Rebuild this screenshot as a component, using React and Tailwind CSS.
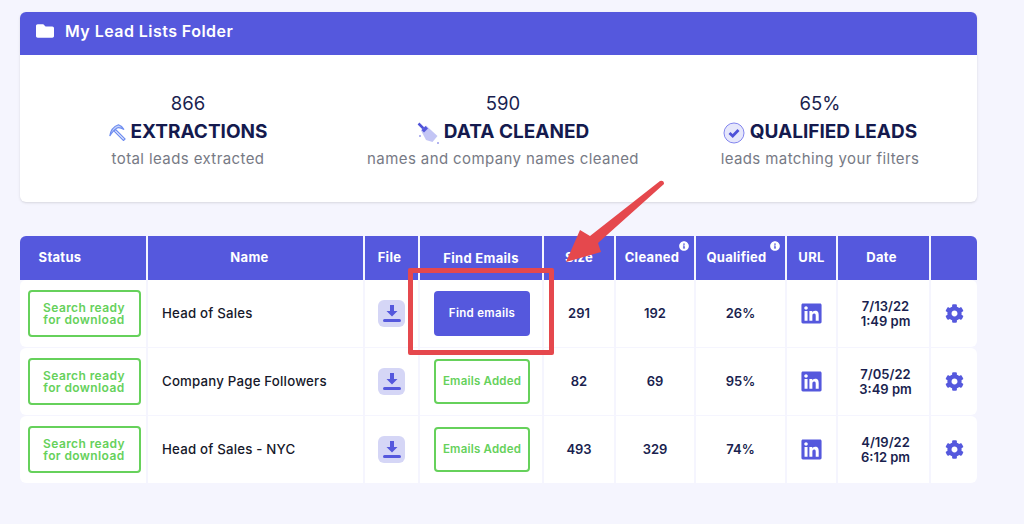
import { FaCog, FaFolder, FaInfoCircle, FaLinkedin } from "react-icons/fa";

const cols = "grid grid-cols-[128px_217px_55px_124px_72px_80px_91px_51px_93px_46px]";

const stats = [
  { value: "866", title: "EXTRACTIONS", sub: "total leads extracted", icon: "pick", w: "w-[336px]" },
  { value: "590", title: "DATA CLEANED", sub: "names and company names cleaned", icon: "broom", w: "w-[294px]" },
  { value: "65%", title: "QUALIFIED LEADS", sub: "leads matching your filters", icon: "check", w: "w-[340px]" },
];

const rows = [
  { name: "Head of Sales", found: false, size: "291", cleaned: "192", qualified: "26%", date: "7/13/22", time: "1:49 pm" },
  { name: "Company Page Followers", found: true, size: "82", cleaned: "69", qualified: "95%", date: "7/05/22", time: "3:49 pm" },
  { name: "Head of Sales - NYC", found: true, size: "493", cleaned: "329", qualified: "74%", date: "4/19/22", time: "6:12 pm" },
];

const PickIcon = () => (
  <svg width="17" height="17" viewBox="0 0 17 17" fill="none" stroke="#6f8df0" strokeWidth="1.200">
    <path d="M0.800 12C1.500 7 4.500 2.500 9.500 0.800C11.500 1.500 13.500 3 15 5.500C12.500 4 10.500 3.500 8.500 3.800C5.500 5.500 3 8.500 0.800 12Z" fill="#c5d2fa" />
    <path d="M6.500 5.500L16 15L14.500 16.500L5 7Z" fill="#ffffff" />
  </svg>
);

const BroomIcon = () => (
  <svg width="22" height="22" viewBox="0 0 22 22">
    <path d="M1.500 1.500L8 8" stroke="#4f52d8" strokeWidth="2.500" />
    <path d="M4 8.500L9 3.500L20.500 14L15.500 20L9 18Z" fill="#c3c5f5" />
    <path d="M4.500 8L8.500 4L11 6.500L7 10.500Z" fill="#5558dd" />
    <circle cx="21" cy="21" r="0.800" fill="#5558dd" />
    <circle cx="3" cy="14" r="0.800" fill="#5558dd" />
  </svg>
);

const CheckIcon = () => (
  <svg width="22" height="22" viewBox="0 0 22 22" fill="none">
    <circle cx="11" cy="11" r="10" fill="#e6e7fb" stroke="#8285ee" strokeWidth="1" />
    <path d="M6.500 11L9.700 14L15.500 8" stroke="#4f52d8" strokeWidth="2.800" />
  </svg>
);

const DownloadIcon = () => (
  <div className="w-[27px] h-[27px] rounded-md bg-[#d5d6f6] flex items-center justify-center">
    <svg width="20" height="20" viewBox="0 0 20 20" fill="#5558dd">
      <path d="M8 1H12V7H15.500L10 12.500L4.500 7H8Z" />
      <rect x="1" y="15" width="18" height="3" rx="1.500" />
    </svg>
  </div>
);

const statIcons = { pick: <PickIcon />, broom: <BroomIcon />, check: <CheckIcon /> };

const GreenBox = ({ className, children }) => (
  <div className={`border-2 border-[#66d15b] rounded-[4px] flex items-center justify-center text-center text-[#66d15b] font-semibold bg-white ${className}`}>
    {children}
  </div>
);

const HeaderCell = ({ children, info, last, className = "" }) => (
  <div className={`relative flex items-center justify-center font-bold text-[13px] tracking-[0.3px] text-white ${last ? "" : "border-r-2 border-[#f5f5fe]"} ${className}`}>
    {children}
    {info && <FaInfoCircle size={10} className="absolute top-[5px] right-[5px]" />}
  </div>
);

const Cell = ({ className = "justify-center", children, last }) => (
  <div className={`flex items-center ${className} ${last ? "" : "border-r-2 border-[#f5f5fe]"}`}>{children}</div>
);

export default function App() {
  return (
    <div className="relative w-[1024px] h-[524px] overflow-hidden bg-[#f5f5fe] px-5 pt-3 font-['Inter','Liberation_Sans',sans-serif]">
      {/* Folder card */}
      <section className="w-[957px] h-[190px] bg-white rounded-md shadow-sm">
        <div className="h-[43px] bg-[#5558dd] rounded-t-md flex items-center gap-[11px] px-4 pb-[5px] text-white">
          <FaFolder size={18} />
          <h1 className="text-[16px] font-semibold tracking-[0.45px]">My Lead Lists Folder</h1>
        </div>
        <div className="flex pt-[36px] text-center">
          {stats.map((s) => (
            <div key={s.title} className={`${s.w} shrink-0 flex flex-col items-center`}>
              <div className="text-[18.500px] leading-6 text-[#1a1f4f]">{s.value}</div>
              <div className="h-[32px] pt-[3px] flex items-center gap-[5px] text-[19px] font-bold text-[#141a4e]">
                {statIcons[s.icon]}
                {s.title}
              </div>
              <div className="mt-[2px] text-[15px] leading-5 tracking-[0.4px] text-[#777a85]">{s.sub}</div>
            </div>
          ))}
        </div>
      </section>

      {/* Lead lists table */}
      <section className="w-[957px] mt-[34px]">
        <div className={`${cols} h-[44px] bg-[#5558dd] rounded-t-md`}>
          <HeaderCell className="pr-[46px]">Status</HeaderCell>
          <HeaderCell className="pr-[12px]">Name</HeaderCell>
          <HeaderCell className="pr-1">File</HeaderCell>
          <HeaderCell className="pt-[2px]">Find Emails</HeaderCell>
          <HeaderCell>Size</HeaderCell>
          <HeaderCell info className="pr-[6px]">Cleaned</HeaderCell>
          <HeaderCell info className="pr-2">Qualified</HeaderCell>
          <HeaderCell>URL</HeaderCell>
          <HeaderCell className="pr-1">Date</HeaderCell>
          <HeaderCell last />
        </div>
        <div className="flex flex-col gap-px">
          {rows.map((r) => (
            <div key={r.name} className={`${cols} h-[67px] bg-white rounded-md text-[13px] font-semibold text-[#1a1f4f]`}>
              <Cell className="justify-center pl-[2px]">
                <GreenBox className="w-[113px] h-[47px] text-[12px] leading-[12px] tracking-[0.4px]">
                  Search ready
                  <br />
                  for download
                </GreenBox>
              </Cell>
              <Cell className="justify-start pl-[14px] text-[13.250px] font-medium tracking-[0.2px] text-[#16182a]">{r.name}</Cell>
              <Cell><DownloadIcon /></Cell>
              <Cell className="justify-center pl-[2px]">
                {r.found ? (
                  <GreenBox className="w-[96px] h-[45px] text-[11.500px] tracking-[0.2px]">Emails Added</GreenBox>
                ) : (
                  <button className="w-[96px] h-[45px] rounded-[4px] bg-[#5558dd] text-white text-[11.500px] font-semibold tracking-[0.3px]">
                    Find emails
                  </button>
                )}
              </Cell>
              <Cell>{r.size}</Cell>
              <Cell>{r.cleaned}</Cell>
              <Cell>{r.qualified}</Cell>
              <Cell><FaLinkedin size={23} className="text-[#5558dd]" /></Cell>
              <Cell className="justify-center pl-1 text-center leading-[15px]">
                <div>
                  {r.date}
                  <br />
                  {r.time}
                </div>
              </Cell>
              <Cell last><FaCog size={19} className="text-[#5558dd]" /></Cell>
            </div>
          ))}
        </div>
      </section>

      {/* Annotation drawn over the table */}
      <div className="absolute left-[408px] top-[268px] w-[146px] h-[87px] border-[5px] border-[#e5484d] rounded-[2px]" />
      <svg className="absolute left-[560px] top-[175px]" width="110" height="92" viewBox="560 175 110 92">
        <path d="M566 262L580 230L590 236L660 181Q664 180 664 184L598 243L601 252Z" fill="#e5484d" />
      </svg>
    </div>
  );
}
